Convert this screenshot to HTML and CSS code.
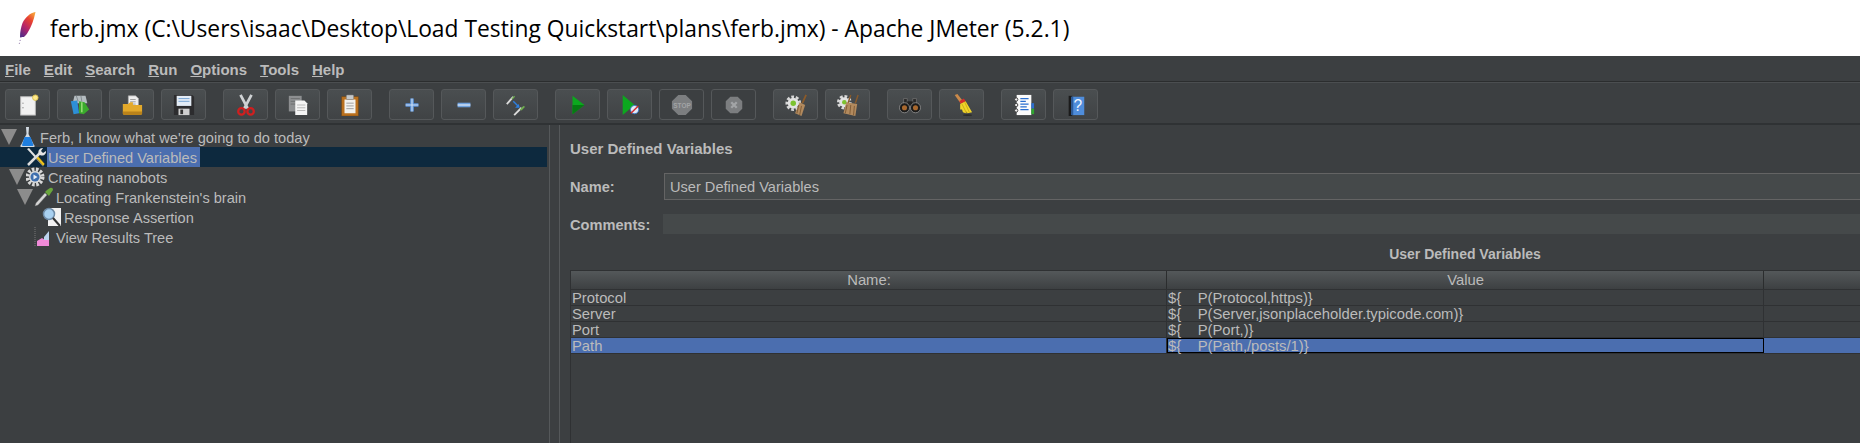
FILE: index.html
```html
<!DOCTYPE html>
<html>
<head>
  <title>ferb.jmx - Apache JMeter (5.2.1)</title>
  <meta name="viewport" content="width=device-width, initial-scale=1.0">
  <link rel="stylesheet" href="styles.css">
</head>
<body>
  <div class="titlebar">
    <svg class="feather" viewBox="0 0 18 33">
      <defs>
        <linearGradient id="featherFill" x1="0.8" y1="0" x2="0.2" y2="1">
          <stop offset="0" stop-color="#f6a13a"/>
          <stop offset="0.3" stop-color="#e8432f"/>
          <stop offset="0.65" stop-color="#b5246a"/>
          <stop offset="1" stop-color="#5a2c86"/>
        </linearGradient>
      </defs>
      <path d="M17.500 0C12 1 7.500 5 4.500 11C3 15 2 20 2 25L6 25C7 24 9 22 10 20C13 15 16 8 17.500 0Z" fill="url(#featherFill)"/>
      <path d="M3 25L1 33" stroke="#6a4a8a" stroke-width="0.8" stroke-dasharray="1 2"/>
    </svg>
    <span class="titletext">ferb.jmx (C:\Users\isaac\Desktop\Load Testing Quickstart\plans\ferb.jmx) - Apache JMeter (5.2.1)</span>
  </div>

  <div class="menubar">
    <span><u>F</u>ile</span>
    <span><u>E</u>dit</span>
    <span><u>S</u>earch</span>
    <span><u>R</u>un</span>
    <span><u>O</u>ptions</span>
    <span><u>T</u>ools</span>
    <span><u>H</u>elp</span>
  </div>

  <div class="toolbar">
    <div class="tgroup">
      <div class="tbtn"><svg viewBox="0 0 24 24"><rect x="4" y="3" width="16" height="20" fill="#f1f1f1" stroke="#bdbdbd"/><circle cx="6.500" cy="10" r=".7" fill="#888"/><circle cx="6.500" cy="15" r=".7" fill="#888"/><circle cx="20" cy="4" r="3" fill="#ffe98a" stroke="#d8bd4e"/></svg></div>
      <div class="tbtn"><svg viewBox="0 0 24 24"><path d="M6 2h12l2 8H4z" fill="#b4bcc0"/><path d="M8 2l2 6M13 2l1 6" stroke="#80888c"/><path d="M2 8l7-1 2 14-6 1z" fill="#2d8fd6"/><path d="M11 8l6 1 5 8-6 5-5-1z" fill="#3aaa2c"/><path d="M14 9v11" stroke="#a3e07f" stroke-width="1.500"/></svg></div>
      <div class="tbtn"><svg viewBox="0 0 24 24"><path d="M8 2h8l3 3v9H8z" fill="#eee" stroke="#aaa" stroke-width=".7"/><path d="M10 6h6M10 8.500h6M10 11h6" stroke="#999"/><path d="M2 11h6l2-2h3v3h10v9a2 2 0 0 1-2 2H4a2 2 0 0 1-2-2z" fill="#e3a92a"/><path d="M2 21a2 2 0 0 0 2 2h17a2 2 0 0 0 2-2v-2H2z" fill="#b9821a"/></svg></div>
      <div class="tbtn"><svg viewBox="0 0 24 24"><path d="M1 1h20l2 2v20H1z" fill="#2c2c2e"/><rect x="4" y="2" width="16" height="11" fill="#e3ecf6"/><path d="M6 5h12M6 8h12" stroke="#6f9fd0"/><rect x="6" y="16" width="12" height="7" fill="#cfcfcf"/><rect x="8" y="17" width="3" height="5" fill="#333"/></svg></div>
    </div>
    <div class="tgroup">
      <div class="tbtn"><svg viewBox="0 0 24 24"><path d="M6 1l8 15M18 1l-8 15" stroke="#cfd2d4" stroke-width="3"/><circle cx="7" cy="19" r="3.500" fill="none" stroke="#d01f1f" stroke-width="2.500"/><circle cx="17" cy="19" r="3.500" fill="none" stroke="#d01f1f" stroke-width="2.500"/></svg></div>
      <div class="tbtn"><svg viewBox="0 0 24 24"><rect x="2" y="2" width="14" height="17" fill="#8d8f91"/><path d="M4 5h10M4 8h10M4 11h10" stroke="#6b6d6f"/><path d="M9 7h10l3 3v13H9z" fill="#f4f4f4"/><path d="M11 12h9M11 15h9M11 18h9" stroke="#b5b5b5"/></svg></div>
      <div class="tbtn"><svg viewBox="0 0 24 24"><rect x="3" y="3" width="18" height="21" fill="#b9701e" stroke="#7b4a12" stroke-width=".6"/><path d="M6 6h12v15H6z" fill="#f2f2ee"/><path d="M8 10h8M8 13h8M8 16h8" stroke="#999"/><rect x="8" y="1" width="8" height="5" rx="1" fill="#c4c8ca" stroke="#777" stroke-width=".6"/></svg></div>
    </div>
    <div class="tgroup">
      <div class="tbtn"><svg viewBox="0 0 24 24"><path d="M12 5v14M5 12h14" stroke="#5c93d8" stroke-width="4"/><path d="M12 5v14M5 12h14" stroke="#cfe0f5" stroke-width="1.200"/></svg></div>
      <div class="tbtn"><svg viewBox="0 0 24 24"><path d="M5 12h14" stroke="#6fa2de" stroke-width="5"/><path d="M5 12h14" stroke="#d5e4f6" stroke-width="1.500"/></svg></div>
      <div class="tbtn"><svg viewBox="0 0 24 24"><path d="M2 11l7-8" stroke="#dcdcdc" stroke-width="2"/><path d="M7 5l3-3 1 1-3 3z" fill="#6fae4f"/><path d="M10 23l8-8" stroke="#dcdcdc" stroke-width="2"/><path d="M16 17l4-4 2 1-4 4z" fill="#6fae4f"/><path d="M9 8l6 6" stroke="#2d7fe0" stroke-width="1.500"/><path d="M16 15l-5 0 4-4z" fill="#2d7fe0"/></svg></div>
    </div>
    <div class="tgroup">
      <div class="tbtn"><svg viewBox="0 0 24 24"><path d="M6 2l13 10L6 22z" fill="#0ca81e"/><path d="M6 12h13L6 22z" fill="#067a12"/></svg></div>
      <div class="tbtn"><svg viewBox="0 0 24 24"><path d="M4 1l13 11L4 23z" fill="#0ca81e"/><circle cx="17" cy="17" r="4.500" fill="#dfe9f6" stroke="#3b78c8"/><path d="M13 21l8-8" stroke="#d52a2a" stroke-width="1.500"/></svg></div>
      <div class="tbtn off"><svg viewBox="0 0 24 24"><path d="M8 1h8l7 7v8l-7 7H8l-7-7V8z" fill="#7c7e80"/><text x="12" y="15" class="stoptext">STOP</text></svg></div>
      <div class="tbtn off"><svg viewBox="0 0 24 24"><path d="M8 3h8l5 5v8l-5 5H8l-5-5V8z" fill="#7c7e80"/><path d="M9 9l6 6M15 9l-6 6" stroke="#a2a4a6" stroke-width="2.500"/></svg></div>
    </div>
    <div class="tgroup">
      <div class="tbtn"><svg viewBox="0 0 24 24"><circle cx="9" cy="10" r="7" fill="none" stroke="#d8d8d8" stroke-width="3" stroke-dasharray="3 2"/><circle cx="9" cy="10" r="6" fill="#e2e2e2"/><circle cx="9" cy="10" r="3" fill="#7cc22f"/><path d="M23 1l-4 9" stroke="#8a5a2a" stroke-width="2"/><path d="M16 9l6 3-4 12-7-3z" fill="#b28a5e"/><path d="M15 12l-2 9M18 13l-2 10" stroke="#7e5a34"/></svg></div>
      <div class="tbtn"><svg viewBox="0 0 24 24"><circle cx="8" cy="9" r="6.500" fill="none" stroke="#d8d8d8" stroke-width="3" stroke-dasharray="3 2"/><circle cx="8" cy="9" r="5.500" fill="#e2e2e2"/><circle cx="8" cy="9" r="2.500" fill="#7cc22f"/><path d="M15 1l-3 9M23 1l-3 9" stroke="#8a5a2a" stroke-width="1.500"/><path d="M10 9l12 2-2 13-13-3z" fill="#b28a5e"/><path d="M11 12l-2 9M15 12l-1 10M19 13l-1 10" stroke="#7e5a34"/></svg></div>
    </div>
    <div class="tgroup">
      <div class="tbtn"><svg viewBox="0 0 24 24"><path d="M5 5h4v6H5zM15 5h4v6h-4z" fill="#2a2a2a" stroke="#888" stroke-width=".6"/><rect x="9" y="8" width="6" height="5" fill="#222"/><circle cx="6" cy="15" r="5.500" fill="#1b1b1b" stroke="#999" stroke-width=".8"/><circle cx="18" cy="15" r="5.500" fill="#1b1b1b" stroke="#999" stroke-width=".8"/><circle cx="6" cy="15" r="2.800" fill="#a8682e"/><circle cx="18" cy="15" r="2.800" fill="#a8682e"/></svg></div>
      <div class="tbtn"><svg viewBox="0 0 24 24"><path d="M4 1l3-1 7 9-3 2z" fill="#c9894a"/><path d="M9 8l5-3 2 3-5 3z" fill="#d42a2a"/><path d="M10 11l6-3 7 12-5 1-1-2-1 2-3-1-1-3-2 0z" fill="#f0d428"/><path d="M12 11l5 10M15 9l5 11" stroke="#c9a918"/><ellipse cx="18" cy="23" rx="5" ry="1" fill="#2a2a2a"/></svg></div>
    </div>
    <div class="tgroup">
      <div class="tbtn"><svg viewBox="0 0 24 24"><rect x="4" y="1" width="16" height="22" fill="#fbfbfb"/><path d="M8 5h9M8 8h6M8 11h9M8 14h7M8 17h9" stroke="#2a6fd0" stroke-width="1.200"/><circle cx="3.500" cy="6" r="1.800" fill="#eee" stroke="#333"/><circle cx="3.500" cy="12" r="1.800" fill="#eee" stroke="#333"/><circle cx="3.500" cy="18" r="1.800" fill="#eee" stroke="#333"/><rect x="20" y="10" width="3" height="6" fill="#2d6fd0"/><rect x="20" y="16" width="3" height="6" fill="#2fa52f"/></svg></div>
      <div class="tbtn"><svg viewBox="0 0 24 24"><path d="M4 2h4v22H4z" fill="#1b1b1b"/><rect x="7" y="3" width="14" height="20" fill="#4f8ddb"/><rect x="7" y="3" width="2" height="20" fill="#2b5c9c"/><text x="14" y="19" class="helptext">?</text></svg></div>
    </div>
  </div>

  <div class="main">
    <div class="tree">
      <div class="node d0">
        <span class="tri"></span>
        <svg class="nicon" viewBox="0 0 20 20"><path d="M8 0h3l-.5 7 5.500 11a1 1 0 0 1-1 2H4a1 1 0 0 1-1-2L8.500 7z" fill="#d3dbe3"/><path d="M6.500 10h6l3 8a1 1 0 0 1-1 1H5a1 1 0 0 1-1-1z" fill="#1f7fe0"/></svg>
        <span class="nlabel">Ferb, I know what we're going to do today</span>
      </div>
      <div class="node d1 current">
        <svg class="nicon" viewBox="0 0 20 20"><path d="M1 2l2-1 15 17-1 1.500z" fill="#e5e5e5"/><path d="M10 11l7 8 2-2-7-8z" fill="#ecc21a" stroke="#222" stroke-width=".5"/><path d="M2 18L14 6" stroke="#ddd" stroke-width="2.500"/><path d="M13 7a4 4 0 0 1 4-6l-2 3 2 2 3-2a4 4 0 0 1-6 4z" fill="#e5e5e5"/></svg>
        <span class="nlabel picked">User Defined Variables</span>
      </div>
      <div class="node d2">
        <span class="tri"></span>
        <svg class="nicon" viewBox="0 0 20 20"><circle cx="9" cy="10" r="7.500" fill="none" stroke="#d8d8d8" stroke-width="4" stroke-dasharray="2.500 1.500"/><circle cx="9" cy="10" r="6" fill="#dcdcdc"/><circle cx="9" cy="10" r="4.500" fill="#3f6fae"/><path d="M7.500 7.500l4 2.500-4 2.500z" fill="#e8eef6"/></svg>
        <span class="nlabel">Creating nanobots</span>
      </div>
      <div class="node d3">
        <span class="tri"></span>
        <svg class="nicon" viewBox="0 0 20 20"><path d="M1 19l3-1 9-10-2-2-9 10z" fill="#d5d5d5" stroke="#777" stroke-width=".4"/><path d="M11 5l4 4 1.500-2.500L19 3a2 2 0 0 0-3-2l-3 2z" fill="#69a53c"/></svg>
        <span class="nlabel">Locating Frankenstein's brain</span>
      </div>
      <div class="node d4">
        <svg class="nicon" viewBox="0 0 20 20"><rect x="6" y="1" width="13" height="18" fill="#f2f2f2"/><circle cx="7" cy="7" r="5.500" fill="#a8d0f0" stroke="#6d8aa6" stroke-width="1.500"/><path d="M11 11l7 8" stroke="#333" stroke-width="2"/></svg>
        <span class="nlabel">Response Assertion</span>
      </div>
      <div class="node d5">
        <svg class="nicon" viewBox="0 0 20 20"><path d="M1 0v20" stroke="#777" stroke-dasharray="1 1"/><path d="M3 19v-5l5-3 3 2h4v6z" fill="#f08ad8"/><path d="M10 10l5-6v9h-5z" fill="#bcd3ee"/></svg>
        <span class="nlabel">View Results Tree</span>
      </div>
    </div>

    <div class="splitter"></div>

    <div class="panel">
      <div class="ptitle">User Defined Variables</div>
      <div class="frow namerow">
        <label class="flabel">Name:</label>
        <div class="nameinput">User Defined Variables</div>
      </div>
      <div class="frow commentrow">
        <label class="flabel">Comments:</label>
        <div class="commentinput"></div>
      </div>
      <div class="tabletitle">User Defined Variables</div>
      <div class="vartable">
        <div class="trow thead">
          <div class="cell cname">Name:</div>
          <div class="cell cvalue">Value</div>
          <div class="cell cextra"></div>
        </div>
        <div class="trow">
          <div class="cell cname">Protocol</div>
          <div class="cell cvalue">${<span class="under">__</span>P(Protocol,https)}</div>
          <div class="cell cextra"></div>
        </div>
        <div class="trow">
          <div class="cell cname">Server</div>
          <div class="cell cvalue">${<span class="under">__</span>P(Server,jsonplaceholder.typicode.com)}</div>
          <div class="cell cextra"></div>
        </div>
        <div class="trow">
          <div class="cell cname">Port</div>
          <div class="cell cvalue">${<span class="under">__</span>P(Port,)}</div>
          <div class="cell cextra"></div>
        </div>
        <div class="trow selected">
          <div class="cell cname">Path</div>
          <div class="cell cvalue focused">${<span class="under">__</span>P(Path,/posts/1)}</div>
          <div class="cell cextra"></div>
        </div>
      </div>
    </div>
  </div>
</body>
</html>
```

FILE: styles.css
```css
html, body {
  height: 100%;
  margin: 0;
  overflow: hidden;
}

body {
  display: flex;
  flex-direction: column;
  background-color: #3c3f41;
  color: #bbbbbb;
  font-family: "Liberation Sans", sans-serif;
  font-size: 14.6px;
}

.titlebar {
  display: flex;
  align-items: center;
  height: 56px;
  background-color: #fff;
}

.feather {
  width: 18px;
  height: 33px;
  margin-left: 18px;
}

.titletext {
  margin-left: 14px;
  color: #000;
  font-family: "Open Sans", sans-serif;
  font-size: 22.8px;
  white-space: nowrap;
}

.menubar {
  display: flex;
  gap: 13px;
  align-items: center;
  height: 26px;
  box-sizing: border-box;
  padding-left: 5px;
  padding-top: 2px;
  font-weight: bold;
  font-size: 15px;
  border-bottom: 1px solid #2b2d2e;
}

.toolbar {
  display: flex;
  gap: 17px;
  height: 43px;
  padding: 6px 0 0 5px;
  box-sizing: border-box;
  border-top: 1px solid #4b4e50;
  border-bottom: 2px solid #2f3234;
}

.tgroup {
  display: flex;
  gap: 7px;
}

.tbtn {
  display: flex;
  align-items: center;
  justify-content: center;
  width: 45px;
  height: 31px;
  box-sizing: border-box;
  border: 1px solid #55585a;
  border-radius: 3px;
  background: linear-gradient(#4a4e50, #404345);
}

.tbtn svg {
  width: 22px;
  height: 22px;
}

.tbtn.off {
  background: none;
}

.stoptext {
  font-size: 7px;
  font-weight: bold;
  text-anchor: middle;
  fill: #a2a4a6;
}

.helptext {
  font-size: 17px;
  text-anchor: middle;
  fill: #eef4fc;
}

.main {
  flex: 1;
  display: flex;
  min-height: 0;
  overflow: hidden;
}

.tree {
  width: 549px;
  padding-top: 2px;
  box-sizing: border-box;
}

.node {
  display: flex;
  align-items: center;
  height: 20px;
  white-space: nowrap;
}

.d0 { padding-left: 0; }
.d1 { padding-left: 26px; }
.d2 { padding-left: 8px; }
.d3 { padding-left: 16px; }
.d4 { padding-left: 42px; }
.d5 { padding-left: 34px; }

.current {
  background-color: #0d293e;
  margin-right: 2px;
}

.tri {
  width: 0;
  height: 0;
  margin-left: 1px;
  margin-right: 1px;
  border-left: 8px solid transparent;
  border-right: 8px solid transparent;
  border-top: 16px solid #8c8c8c;
}

.nicon {
  width: 20px;
  height: 20px;
}

.nlabel {
  margin-left: 2px;
  padding-top: 2px;
}

.picked {
  margin-left: 1px;
  padding: 2px 3px 0 1px;
  line-height: 18px;
  background-color: #4b6eaf;
}

.splitter {
  width: 9px;
  border-left: 1px solid #55585a;
  border-right: 1px solid #55585a;
}

.panel {
  flex: 1;
  display: flex;
  flex-direction: column;
  min-width: 0;
  padding-left: 10px;
}

.ptitle {
  height: 48px;
  line-height: 48px;
  font-size: 15px;
  font-weight: bold;
}

.frow {
  display: flex;
  align-items: center;
}

.flabel {
  font-weight: bold;
}

.namerow {
  height: 27px;
}

.namerow .flabel {
  width: 94px;
}

.nameinput {
  flex: 1;
  height: 27px;
  line-height: 26px;
  box-sizing: border-box;
  padding-left: 5px;
  border: 1px solid #646464;
  border-right: none;
  background-color: #45494a;
}

.commentrow {
  height: 20px;
  margin-top: 14px;
}

.commentrow .flabel {
  width: 93px;
  padding-top: 2px;
}

.commentinput {
  flex: 1;
  height: 20px;
  background-color: #45494a;
}

.tabletitle {
  width: 1790px;
  height: 36px;
  line-height: 40px;
  text-align: center;
  font-size: 14px;
  font-weight: bold;
}

.vartable {
  flex: 1;
  border-left: 1px solid #2f3133;
}

.trow {
  display: flex;
  height: 16px;
  box-sizing: border-box;
  border-bottom: 1px solid #2f3133;
}

.thead {
  height: 20px;
  border-top: 1px solid #2f3133;
  background: linear-gradient(#54585a, #3d4042);
}

.cell {
  height: 15px;
  line-height: 16px;
  font-size: 14.8px;
  white-space: nowrap;
  box-sizing: border-box;
  padding-left: 1px;
  border-right: 1px solid #2f3133;
}

.thead .cell {
  height: 18px;
  line-height: 19px;
  text-align: center;
  border-right-color: #2b2d2e;
}

.cname {
  width: 596px;
}

.cvalue {
  width: 597px;
}

.cextra {
  flex: 1;
  border-right: none;
}

.under {
  color: transparent;
}

.selected {
  background-color: #4b6eaf;
}

.focused {
  border: 1px solid #000;
  line-height: 14px;
  padding-left: 0;
}
```
